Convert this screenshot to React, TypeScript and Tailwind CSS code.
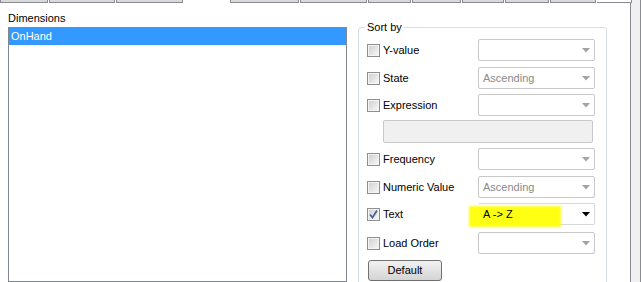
import React from 'react';

type Row = { label: string; value?: string; checked?: boolean; enabled?: boolean; gap: number };

const rows: Row[] = [
  { label: 'Y-value', gap: 0 },
  { label: 'State', value: 'Ascending', gap: 6 },
  { label: 'Expression', gap: 5 },
  { label: 'Frequency', gap: 5 },
  { label: 'Numeric Value', value: 'Ascending', gap: 6 },
  { label: 'Text', value: 'A -> Z', checked: true, enabled: true, gap: 5 },
  { label: 'Load Order', gap: 7 },
];

// tab bottoms peeking above the page: [width, selected]
const tabs: [number, boolean][] = [
  [48, false], [66, false], [67, false], [45, true], [69, false], [67, false],
  [43, false], [49, false], [42, false], [44, false], [46, false],
];

const Checkbox = ({ checked }: { checked?: boolean }) => (
  <div className="relative w-[13px] h-[13px] shrink-0 border border-[#8e8f8f] bg-[#f4f4f4]">
    <div className="absolute inset-[1px] bg-gradient-to-br from-[#cfd1d4] to-[#f6f6f6]" />
    {checked && (
      <svg className="absolute left-[1px] top-[1px]" width="9" height="9" viewBox="0 0 9 9">
        <path d="M1 4.5 L3.5 7.5 L8 0.5" fill="none" stroke="#4a5f92" strokeWidth="1.7" />
      </svg>
    )}
  </div>
);

const Combo = ({ value, enabled }: { value?: string; enabled?: boolean }) => (
  <div
    className={`relative w-[117px] h-[22px] shrink-0 flex items-center rounded-[2px] border bg-white ${
      enabled ? 'border-[#d8d8d8] border-l-transparent' : 'border-[#c8c8c8]'
    }`}
  >
    {enabled && (
      <div className="absolute left-[-10px] top-[2px] w-[92px] h-[21px] bg-[#ffff14] blur-[1px]" />
    )}
    <span className={`relative pl-[4px] flex-1 ${enabled ? 'text-black' : 'text-[#8a8a8a]'}`}>{value}</span>
    <svg className="relative mr-[4px]" width="8" height="5" viewBox="0 0 8 5">
      <path d="M0 0 H8 L4 4.5 Z" fill={enabled ? '#000' : '#a3a3a3'} />
    </svg>
  </div>
);

export default function App() {
  return (
    <div className="w-[641px] h-[282px] overflow-hidden bg-white flex flex-col text-[11px] leading-[13px] text-black font-['Liberation_Sans',Arial,sans-serif]">
      {/* tab strip */}
      <div className="flex h-[3px] shrink-0">
        {tabs.map(([w, sel], i) => (
          <div
            key={i}
            style={{ width: w }}
            className={`h-full shrink-0 mr-[1px] ${sel ? 'bg-white' : 'bg-[#d9d9d9] border-x border-b border-[#8a8c92]'}`}
          />
        ))}
        <div className="flex-1 border-b border-[#8a8c92] border-r" />
        <div className="w-[9px] bg-[#f0f0f0] border-r border-[#8a8c92]" />
      </div>

      <div className="flex flex-1 min-h-0">
        <div className="w-[631px] border-r border-[#8a8c92] flex pl-[8px]">
          {/* Dimensions */}
          <div className="w-[339px] flex flex-col pt-[9px]">
            <div className="h-[13px]">Dimensions</div>
            <div className="mt-[2px] h-[300px] border border-[#828790]">
              <div className="h-[17px] bg-[#3399ff] text-white pl-[2px] flex items-center">OnHand</div>
            </div>
          </div>

          {/* Sort by */}
          <div className="ml-[11px] mt-[24px] w-[249px] h-[300px] relative border border-[#d5dfe5] rounded-[3px] pl-[8px] pt-[11px]">
            <span className="absolute left-[6px] top-[-7px] bg-white px-[2px]">Sort by</span>
            <div className="flex flex-col">
              {rows.map((r) => (
                <React.Fragment key={r.label}>
                  <div className="flex items-center h-[22px]" style={{ marginTop: r.gap }}>
                    <div className="w-[111px] flex items-center gap-[3px] pt-[1px]">
                      <Checkbox checked={r.checked} />
                      <span>{r.label}</span>
                    </div>
                    <Combo value={r.value} enabled={r.enabled} />
                  </div>
                  {r.label === 'Expression' && (
                    <div className="ml-[16px] mt-[4px] w-[210px] h-[23px] rounded-[2px] border border-[#c8c8c8] bg-[#f0f0f0]" />
                  )}
                </React.Fragment>
              ))}
              <button className="ml-[1px] mt-[6px] w-[74px] h-[21px] rounded-[3px] border border-[#707070] bg-gradient-to-b from-[#f2f2f2] to-[#d4d4d4] text-black text-[11px] leading-[13px]">
                Default
              </button>
            </div>
          </div>
        </div>
        <div className="w-[10px] bg-[#f0f0f0] border-r border-[#8a8c92]" />
      </div>
    </div>
  );
}
